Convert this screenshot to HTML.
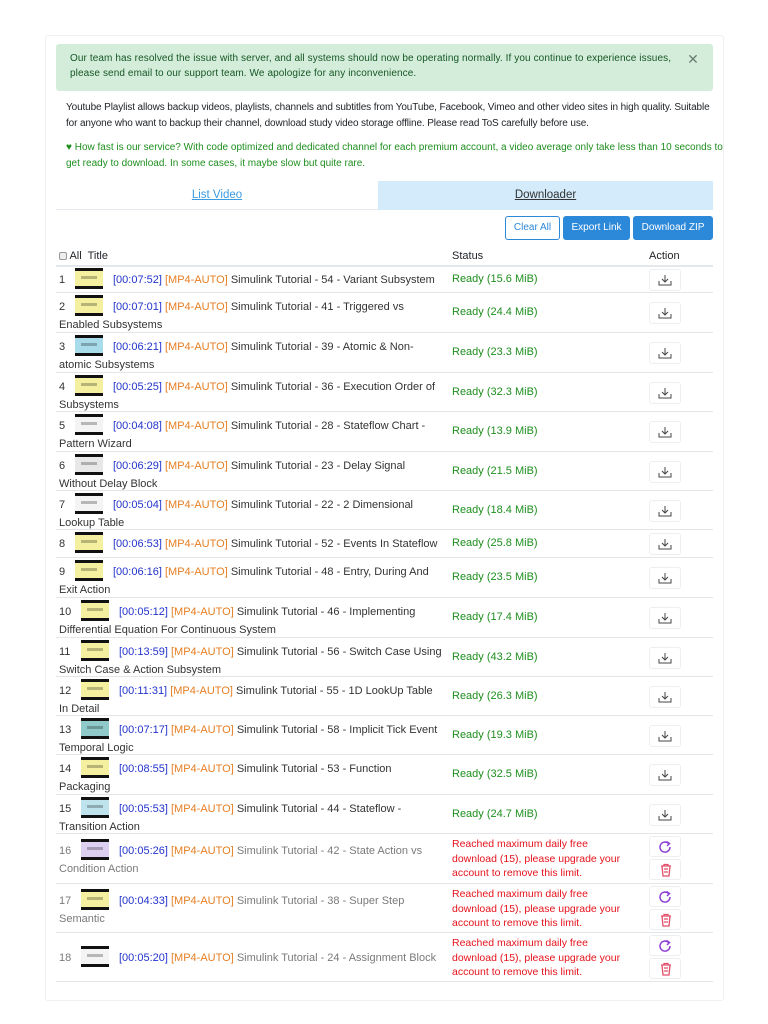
<!DOCTYPE html>
<html><head><meta charset="utf-8"><style>
*{box-sizing:border-box;margin:0;padding:0}
body{width:768px;height:1024px;background:#fff;font-family:"Liberation Sans",sans-serif;font-size:10.5px;color:#212529;position:relative;overflow:hidden}
.card{position:absolute;left:45px;top:35px;width:679px;height:966px;border:1px solid #eef0f2;border-radius:3px}
.alert{position:absolute;left:56px;top:44px;width:657px;height:47px;background:#d4edda;border-radius:3px;color:#155724;padding:8px 14px;line-height:14.5px;font-size:10px;white-space:nowrap;letter-spacing:0.1px}
.alert .x{position:absolute;right:14px;top:8px;font-size:14px;color:#6b7e70}
.p1{position:absolute;left:66px;top:100px;width:660px;line-height:15.5px;font-size:10px;color:#212529;white-space:nowrap;letter-spacing:-0.12px}
.p2{position:absolute;left:66px;top:140px;width:660px;line-height:15.5px;font-size:10px;color:#1e8f1e;white-space:nowrap}
.tab1{position:absolute;left:56px;top:181px;width:322px;height:29px;text-align:center;line-height:29px;font-size:11.5px;color:#3a9be0;text-decoration:underline;border-bottom:1px solid #e5e9ee}
.tab2{position:absolute;left:378px;top:181px;width:335px;height:29px;background:#d3ebfa;text-align:center;line-height:29px;font-size:11.5px;color:#333;text-decoration:underline}
.btn{position:absolute;top:216px;height:24px;line-height:22px;font-size:10px;text-align:center;border-radius:3px;border:1px solid #2c88d9;background:#2c88d9;color:#fff}
.hdr{position:absolute;top:248px;height:19px;left:56px;width:657px;border-bottom:2px solid #e5e8eb;font-size:11px}
.row{position:absolute;left:56px;width:657px;border-bottom:1px solid #e3e6e9}
.t{position:absolute;left:3px;top:2px;width:400px;line-height:18px;white-space:nowrap;color:#333;font-size:11px}
.n{display:inline-block;width:16px}
.n2{display:inline-block;width:22px}
.th{display:inline-block;width:28px;height:21px;vertical-align:-6px;margin-right:10px;border-top:3px solid #111;border-bottom:3px solid #111;position:relative}
.th::after{content:"";position:absolute;left:6px;right:6px;top:5px;height:3px;background:rgba(0,0,0,.25)}
.tm{color:#2233cc}.mp{color:#e67e22}
.st{position:absolute;left:396px;color:#1e8f1e;font-size:11px}
.err{position:absolute;left:396px;color:#e5121b;line-height:14.5px;font-size:10.5px;top:3px}
.ab{position:absolute;left:593px;width:32px;height:22px;border:1px solid #eceef0;border-radius:3px;background:#fff}
.g .t{color:#7a7a7a}
</style></head><body>
<div class="card"></div>
<div class="alert">Our team has resolved the issue with server, and all systems should now be operating normally. If you continue to experience issues,<br>please send email to our support team. We apologize for any inconvenience.<span class="x">✕</span></div>
<div class="p1">Youtube Playlist allows backup videos, playlists, channels and subtitles from YouTube, Facebook, Vimeo and other video sites in high quality. Suitable<br>for anyone who want to backup their channel, download study video storage offline. Please read ToS carefully before use.</div>
<div class="p2">♥ How fast is our service? With code optimized and dedicated channel for each premium account, a video average only take less than 10 seconds to<br>get ready to download. In some cases, it maybe slow but quite rare.</div>
<div class="tab1">List Video</div>
<div class="tab2">Downloader</div>
<div class="btn" style="left:505px;width:55px;background:#fff;color:#2c88d9">Clear All</div>
<div class="btn" style="left:563px;width:67px">Export Link</div>
<div class="btn" style="left:633px;width:80px">Download ZIP</div>
<div class="hdr"><span style="position:absolute;left:3px;top:2px"><span style="display:inline-block;width:8px;height:8px;border:1px solid #999;border-radius:2px;background:#eee;vertical-align:-1px"></span> All&nbsp; Title</span><span style="position:absolute;left:396px;top:2px">Status</span><span style="position:absolute;left:593px;top:2px">Action</span></div>

<div id="rows"></div>
<script>
var dl='<svg width="14" height="12" viewBox="0 0 14 12" style="position:absolute;left:8px;top:4px"><path d="M7 1v7M4 5l3 3 3-3M1 7v4h12V7" fill="none" stroke="#444" stroke-width="1"/></svg>';
var rf='<svg width="14" height="14" viewBox="0 0 14 14" style="position:absolute;left:8px;top:3px"><path d="M10.5 3.5A5 5 0 1 0 12 7" fill="none" stroke="#8e3fd4" stroke-width="1.5"/><path d="M8.5 1.5l3 2-2.5 2.5" fill="none" stroke="#8e3fd4" stroke-width="1.5"/></svg>';
var tr='<svg width="12" height="14" viewBox="0 0 12 14" style="position:absolute;left:10px;top:3px"><path d="M1 3h10M4 3V1.5h4V3M2 3l1 10h6l1-10M4 6h4M4 9h4" fill="none" stroke="#e24f6a" stroke-width="1.3"/></svg>';
var R=[
[266,27,1,"00:07:52","Simulink Tutorial - 54 - Variant Subsystem","","15.6","#f5f0a0"],
[293,40,2,"00:07:01","Simulink Tutorial - 41 - Triggered vs","Enabled Subsystems","24.4","#f5f0a0"],
[333,40,3,"00:06:21","Simulink Tutorial - 39 - Atomic &amp; Non-","atomic Subsystems","23.3","#a9dcea"],
[373,39,4,"00:05:25","Simulink Tutorial - 36 - Execution Order of","Subsystems","32.3","#f5f0a0"],
[412,40,5,"00:04:08","Simulink Tutorial - 28 - Stateflow Chart -","Pattern Wizard","13.9","#f4f4f4"],
[452,39,6,"00:06:29","Simulink Tutorial - 23 - Delay Signal","Without Delay Block","21.5","#e8e8e8"],
[491,39,7,"00:05:04","Simulink Tutorial - 22 - 2 Dimensional","Lookup Table","18.4","#f4f4f4"],
[530,28,8,"00:06:53","Simulink Tutorial - 52 - Events In Stateflow","","25.8","#f5f0a0"],
[558,40,9,"00:06:16","Simulink Tutorial - 48 - Entry, During And","Exit Action","23.5","#f5f0a0"],
[598,40,10,"00:05:12","Simulink Tutorial - 46 - Implementing","Differential Equation For Continuous System","17.4","#f5f0a0"],
[638,39,11,"00:13:59","Simulink Tutorial - 56 - Switch Case Using","Switch Case &amp; Action Subsystem","43.2","#f5f0a0"],
[677,39,12,"00:11:31","Simulink Tutorial - 55 - 1D LookUp Table","In Detail","26.3","#f5f0a0"],
[716,39,13,"00:07:17","Simulink Tutorial - 58 - Implicit Tick Event","Temporal Logic","19.3","#8fc9c9"],
[755,40,14,"00:08:55","Simulink Tutorial - 53 - Function","Packaging","32.5","#f5f0a0"],
[795,39,15,"00:05:53","Simulink Tutorial - 44 - Stateflow -","Transition Action","24.7","#bfe3ec"],
[834,50,16,"00:05:26","Simulink Tutorial - 42 - State Action vs","Condition Action","","#dccff0"],
[884,49,17,"00:04:33","Simulink Tutorial - 38 - Super Step","Semantic","","#f5f0a0"],
[933,49,18,"00:05:20","Simulink Tutorial - 24 - Assignment Block","","","#f4f4f4"]];
var h='';
R.forEach(function(r){
 var top=r[0],ht=r[1],g=r[6]==="";
 h+='<div class="row'+(g?' g':'')+'" style="top:'+top+'px;height:'+ht+'px">';
 var tt=(r[2]==18)?13:(g?5:2);
 h+='<div class="t" style="top:'+tt+'px"><span class="'+(r[2]<10?'n':'n2')+'">'+r[2]+'</span><span class="th" style="background:'+r[7]+'"></span><span class="tm">['+r[3]+']</span> <span class="mp">[MP4-AUTO]</span> '+r[4]+(r[5]?'<br>'+r[5]:'')+'</div>';
 if(!g){
  h+='<div class="st" style="top:'+(ht/2-7)+'px">Ready ('+r[6]+' MiB)</div>';
  h+='<div class="ab" style="top:'+(ht/2-11)+'px">'+dl+'</div>';
 } else {
  h+='<div class="err">Reached maximum daily free<br>download (15), please upgrade your<br>account to remove this limit.</div>';
  h+='<div class="ab" style="top:2px;height:21px">'+rf+'</div><div class="ab" style="top:25px;height:21px">'+tr+'</div>';
 }
 h+='</div>';
});
document.getElementById('rows').innerHTML=h;
</script>
</body></html>
